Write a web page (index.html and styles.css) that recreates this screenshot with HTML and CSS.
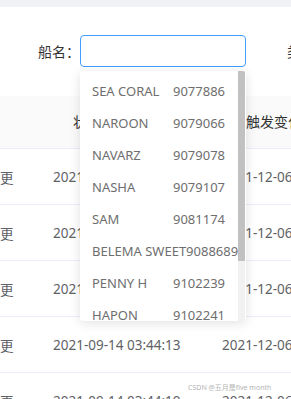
FILE: index.html
```html
<!DOCTYPE html>
<html lang="zh-CN">
<head>
    <meta charset="UTF-8">
    <meta name="viewport" content="width=device-width, initial-scale=1.0">
    <title>船舶列表</title>
    <link rel="stylesheet" href="styles.css">
</head>
<body>
    <div class="topbar"></div>

    <div class="filters">
        <div class="field">
            <label class="field-label">船名：</label>
            <div class="select">
                <input type="text" class="select-input">
                <div class="dropdown">
                    <ul class="dropdown-list">
                        <li class="dropdown-item"><span class="ship-name">SEA CORAL</span><span>9077886</span></li>
                        <li class="dropdown-item"><span class="ship-name">NAROON</span><span>9079066</span></li>
                        <li class="dropdown-item"><span class="ship-name">NAVARZ</span><span>9079078</span></li>
                        <li class="dropdown-item"><span class="ship-name">NASHA</span><span>9079107</span></li>
                        <li class="dropdown-item"><span class="ship-name">SAM</span><span>9081174</span></li>
                        <li class="dropdown-item"><span class="ship-name">BELEMA SWEET</span><span>9088689</span></li>
                        <li class="dropdown-item"><span class="ship-name">PENNY H</span><span>9102239</span></li>
                        <li class="dropdown-item"><span class="ship-name">HAPON</span><span>9102241</span></li>
                    </ul>
                    <div class="scrollbar"><div class="scrollbar-thumb"></div></div>
                </div>
            </div>
        </div>
        <div class="field">
            <label class="field-label">类型：</label>
        </div>
    </div>

    <div class="table">
        <div class="row head">
            <div class="cell c1">变更</div>
            <div class="cell c2 head-c2">状态变化时间</div>
            <div class="cell c3 head-c3">是否触发变化</div>
        </div>
        <div class="row">
            <div class="cell c1">更</div>
            <div class="cell c2">2021-09-14 03:44:20</div>
            <div class="cell c3">2021-12-06</div>
        </div>
        <div class="row">
            <div class="cell c1">更</div>
            <div class="cell c2">2021-09-14 03:44:18</div>
            <div class="cell c3">2021-12-06</div>
        </div>
        <div class="row">
            <div class="cell c1">更</div>
            <div class="cell c2">2021-09-14 03:44:15</div>
            <div class="cell c3">2021-12-06</div>
        </div>
        <div class="row">
            <div class="cell c1">更</div>
            <div class="cell c2">2021-09-14 03:44:13</div>
            <div class="cell c3">2021-12-06</div>
        </div>
        <div class="row">
            <div class="cell c1">更</div>
            <div class="cell c2">2021-09-14 03:44:10</div>
            <div class="cell c3">2021-12-06</div>
        </div>
    </div>

    <div class="watermark">CSDN @五月是five month</div>
</body>
</html>
```

FILE: styles.css
```css
body {
    margin: 0;
    font-family: "Noto Sans", "Noto Sans CJK SC", sans-serif;
    font-size: 13.5px;
    color: #606266;
    background-color: #fff;
    width: 291px;
    height: 399px;
    overflow: hidden;
    position: relative;
}

.topbar {
    height: 7px;
    background-color: #f0f2f5;
}

.filters {
    display: flex;
    gap: 41px;
    padding-left: 38px;
    margin-top: 28px;
    white-space: nowrap;
}

.field {
    display: flex;
    align-items: center;
}

.field-label {
    color: #333;
    width: 42px;
    font-size: 14px;
    font-family: "Noto Sans CJK SC", sans-serif;
}

.select {
    position: relative;
}

.select-input {
    display: block;
    width: 166px;
    height: 32px;
    box-sizing: border-box;
    border: 1px solid #409eff;
    border-radius: 4px;
    outline: none;
    padding: 0 12px;
    margin: 0;
}

.dropdown {
    position: absolute;
    top: 36px;
    left: 0;
    width: 166px;
    height: 250px;
    overflow: hidden;
    background-color: #fff;
    border-radius: 4px;
    box-shadow: 0 2px 12px rgba(0, 0, 0, 0.12);
    z-index: 10;
}

.dropdown-list {
    list-style: none;
    margin: 0;
    padding: 4px 0;
    width: 158px;
    overflow: hidden;
}

.dropdown-item {
    display: flex;
    height: 32px;
    line-height: 32px;
    padding-left: 12px;
    font-size: 13px;
    color: #6e6e6e;
    white-space: nowrap;
}

.ship-name {
    min-width: 81px;
    flex-shrink: 0;
}

.scrollbar {
    position: absolute;
    top: 0;
    right: 1px;
    width: 7px;
    height: 100%;
    background-color: #f1f1f1;
}

.scrollbar-thumb {
    height: 190px;
    background-color: #c1c1c1;
}

.table {
    margin-top: 29px;
}

.row {
    display: flex;
    height: 56px;
    align-items: center;
    border-bottom: 1px solid #ebeef5;
    box-sizing: border-box;
    white-space: nowrap;
}

.row.head {
    height: 53px;
    padding-bottom: 3px;
    background-color: #fafafa;
    color: #333;
    font-size: 14px;
    font-family: "Noto Sans CJK SC", sans-serif;
}

.cell {
    overflow: hidden;
}

.c1 {
    width: 53px;
    flex-shrink: 0;
    font-family: "Noto Sans CJK SC", sans-serif;
}

.head .c1 {
    visibility: hidden;
}

.c2 {
    width: 169px;
    flex-shrink: 0;
}

.head-c2 {
    padding-left: 20px;
    box-sizing: border-box;
}

.c3 {
    flex-shrink: 0;
}

.head-c3 {
    margin-left: -4px;
}

.watermark {
    position: absolute;
    left: 188px;
    top: 382px;
    font-size: 7px;
    color: #b4b4b4;
    font-family: "Noto Sans", "Noto Sans CJK SC", sans-serif;
}
```
